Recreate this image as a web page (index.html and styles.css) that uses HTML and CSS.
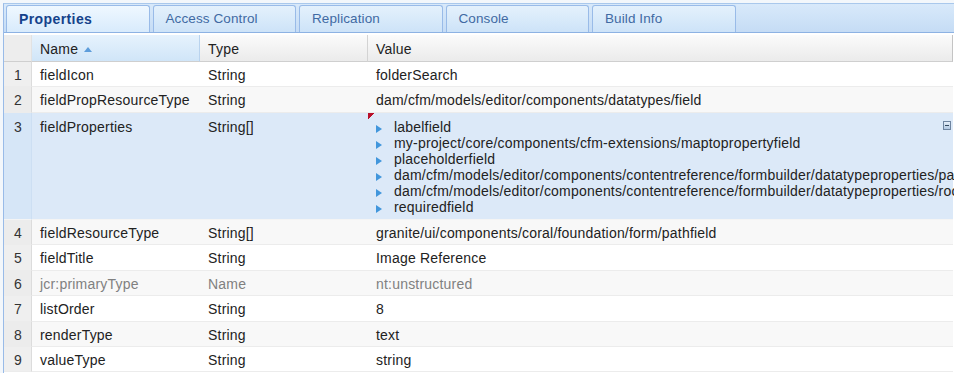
FILE: index.html
```html
<!DOCTYPE html>
<html lang="en">
<head>
    <meta charset="UTF-8">
    <title>Properties</title>
    <link rel="stylesheet" href="styles.css">
</head>
<body>
    <div class="panel">
        <div class="tab-strip">
            <div class="tab active">Properties</div>
            <div class="tab">Access Control</div>
            <div class="tab">Replication</div>
            <div class="tab">Console</div>
            <div class="tab">Build Info</div>
        </div>
        <table class="grid">
            <colgroup>
                <col class="col-num">
                <col class="col-name">
                <col class="col-type">
                <col class="col-value">
            </colgroup>
            <thead>
                <tr>
                    <th class="num"></th>
                    <th class="sorted">Name<span class="sort-asc"></span></th>
                    <th>Type</th>
                    <th class="last">Value</th>
                </tr>
            </thead>
            <tbody>
                <tr>
                    <td class="num">1</td>
                    <td>fieldIcon</td>
                    <td>String</td>
                    <td>folderSearch</td>
                </tr>
                <tr class="alt">
                    <td class="num">2</td>
                    <td>fieldPropResourceType</td>
                    <td>String</td>
                    <td>dam/cfm/models/editor/components/datatypes/field</td>
                </tr>
                <tr class="selected">
                    <td class="num">3</td>
                    <td>fieldProperties</td>
                    <td>String[]</td>
                    <td class="dirty">
                        <div class="multi">
                            <ul class="values">
                                <li>labelfield</li>
                                <li>my-project/core/components/cfm-extensions/maptopropertyfield</li>
                                <li>placeholderfield</li>
                                <li>dam/cfm/models/editor/components/contentreference/formbuilder/datatypeproperties/pathfield</li>
                                <li>dam/cfm/models/editor/components/contentreference/formbuilder/datatypeproperties/rootpathfield</li>
                                <li>requiredfield</li>
                            </ul>
                            <span class="collapse">
                                <svg width="8" height="9" viewBox="0 0 8 9">
                                    <defs>
                                        <linearGradient id="btn" x1="0" y1="0" x2="0" y2="1">
                                            <stop offset="0" stop-color="#e9f1fa"/>
                                            <stop offset="1" stop-color="#aec6e0"/>
                                        </linearGradient>
                                    </defs>
                                    <rect x="0.5" y="0.5" width="7" height="8" fill="url(#btn)" stroke="#6f85a0"/>
                                    <rect x="2" y="4" width="4" height="1" fill="#34495f"/>
                                </svg>
                            </span>
                        </div>
                    </td>
                </tr>
                <tr class="alt">
                    <td class="num">4</td>
                    <td>fieldResourceType</td>
                    <td>String[]</td>
                    <td>granite/ui/components/coral/foundation/form/pathfield</td>
                </tr>
                <tr>
                    <td class="num">5</td>
                    <td>fieldTitle</td>
                    <td>String</td>
                    <td>Image Reference</td>
                </tr>
                <tr class="alt protected">
                    <td class="num">6</td>
                    <td>jcr:primaryType</td>
                    <td>Name</td>
                    <td>nt:unstructured</td>
                </tr>
                <tr>
                    <td class="num">7</td>
                    <td>listOrder</td>
                    <td>String</td>
                    <td>8</td>
                </tr>
                <tr class="alt">
                    <td class="num">8</td>
                    <td>renderType</td>
                    <td>String</td>
                    <td>text</td>
                </tr>
                <tr>
                    <td class="num">9</td>
                    <td>valueType</td>
                    <td>String</td>
                    <td>string</td>
                </tr>
            </tbody>
        </table>
    </div>
</body>
</html>
```

FILE: styles.css
```css
* {
    box-sizing: border-box;
}

html, body {
    margin: 0;
    overflow: hidden;
}

body {
    width: 954px;
    height: 373px;
    background: #f3f7fb;
    font-family: 'Liberation Sans', Arial, sans-serif;
    font-size: 14px;
    letter-spacing: 0.2px;
    color: #222;
}

.panel {
    margin: 3px 0 0 3px;
    height: 370px;
    background: #fff;
    border-top: 1px solid #a9c8ec;
    border-left: 1px solid #99bbe8;
}

/* tabs */

.tab-strip {
    display: flex;
    gap: 3px;
    height: 29px;
    padding: 1px 0 0 2px;
    background: linear-gradient(#d8e9fa, #c5dcf5);
    border-bottom: 1px solid #8db2e3;
}

.tab {
    width: 143.5px;
    height: 27px;
    padding-left: 12px;
    line-height: 26px;
    font-size: 13.5px;
    letter-spacing: 0.1px;
    color: #416aa3;
    background: linear-gradient(#e4f1fc, #cde3f8);
    border: 1px solid #99bbe8;
    border-bottom: none;
    border-radius: 3px 3px 0 0;
}

.tab.active {
    background: linear-gradient(#eff8ff, #d8ebfc);
    color: #15428b;
    font-weight: bold;
    font-size: 14px;
    letter-spacing: 0.4px;
}

/* grid */

.grid {
    margin-top: 2px;
    width: 949px;
    table-layout: fixed;
    border-collapse: separate;
    border-spacing: 0;
}

.col-num {
    width: 28px;
}

.col-name,
.col-type {
    width: 168px;
}

th {
    height: 27px;
    padding: 1px 8px 0;
    text-align: left;
    font-weight: normal;
    color: #222;
    background: linear-gradient(#fbfbfb, #ebebeb);
    border-right: 1px solid #d3d3d3;
    border-bottom: 1px solid #cfcfcf;
}

th.num {
    background: #ededed;
    border-right-color: #e2e2e2;
}

th.sorted {
    background: linear-gradient(#e6f2fd, #d0e5f8);
    border-right-color: #b9d3ee;
}

th.last {
    border-right-color: #c4c4c4;
}

.sort-asc {
    display: inline-block;
    margin-left: 6px;
    vertical-align: 2px;
    border-left: 4px solid transparent;
    border-right: 4px solid transparent;
    border-bottom: 5px solid #5d9ddb;
}

td {
    padding: 5px 8px 3.4px;
    line-height: 16px;
    vertical-align: top;
    white-space: nowrap;
    border-bottom: 1px solid #ececec;
}

td.num {
    padding-right: 9px;
    text-align: right;
    color: #333;
    background: #efefef;
    border-right: 1px solid #dcdcdc;
}

tr.alt td {
    background-color: #f8f8f8;
}

tr.alt td.num {
    background-color: #ececec;
}

tr.protected td {
    color: #808080;
}

tr.protected td.num {
    color: #333;
}

tr.selected td {
    padding-top: 6.7px;
    padding-bottom: 3.5px;
    background-color: #dce9f8;
    border-bottom-color: #f4f4f4;
}

tr.selected td.num {
    background-color: #d6e6f7;
    border-right-color: #cddff3;
}

td.dirty {
    background-image: linear-gradient(135deg, #b8102a 50%, transparent 50%);
    background-size: 6px 6px;
    background-repeat: no-repeat;
    padding-right: 2px;
}

.multi {
    display: flex;
}

.values {
    flex: 1;
    min-width: 0;
    margin: 0;
    padding: 0;
    list-style: none;
}

.values li::before {
    content: '';
    display: inline-block;
    margin-right: 12px;
    vertical-align: -1px;
    border-top: 4px solid transparent;
    border-bottom: 4px solid transparent;
    border-left: 6px solid #4196dc;
}

.collapse {
    flex: none;
    margin-top: 2px;
    line-height: 0;
    height: 9px;
}
```
